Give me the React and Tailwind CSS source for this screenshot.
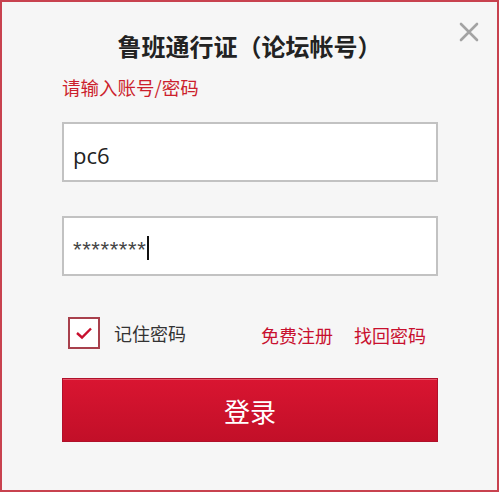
/**
 * 鲁班通行证登录框
 */
const cjk = "font-['Microsoft_YaHei','Noto_Sans_CJK_SC',sans-serif]";

export default function App() {
  return (
    <div className="w-[500px] h-[493px] bg-white">
      <div className={`relative w-[499px] h-[492px] border-2 border-[#c8424f] bg-[#f6f6f6] ${cjk}`}>
        <button className="absolute left-[455px] top-[18px] w-6 h-6 flex items-center justify-center">
          <svg width="20" height="20" viewBox="0 0 20 20">
            <path d="M2 2 L18 18 M18 2 L2 18" stroke="#a3a3a3" strokeWidth="2.6" strokeLinecap="round" />
          </svg>
        </button>

        <h2 className="pt-[28px] text-center text-[24px] leading-[32px] font-bold text-[#222]">
          鲁班通行证（论坛帐号）
        </h2>

        <div className="pl-[60px] w-[436px]">
          <p className="mt-[13px] text-[18.5px] leading-[24px] text-[#cc1f2d]">请输入账号/密码</p>

          <div className="mt-[23px] h-[60px] border-2 border-[#c2c2c2] bg-white flex items-center pl-[9px]">
            <span className="text-[22px] text-[#222] font-['Open_Sans','Noto_Sans',sans-serif] mt-[6px]">pc6</span>
          </div>

          <div className="mt-[34px] h-[60px] border-2 border-[#c2c2c2] bg-white flex items-center pl-[9px]">
            <span className="text-[22px] text-[#444] font-['Liberation_Sans',sans-serif] tracking-[0.6px] mt-[6px]">********</span>
            <span className="ml-[1px] w-[2px] h-[24px] bg-[#111] mt-[4px]" />
          </div>

          <div className="mt-[41px] h-[32px] flex items-center">
            <div className="w-[32px] h-[32px] border-2 border-[#a8404c] bg-white flex items-center justify-center ml-[6px]">
              <svg width="18" height="14" viewBox="0 0 18 14">
                <path d="M2 7 L7 11.5 L16 2.5" fill="none" stroke="#c8102e" strokeWidth="2.4" />
              </svg>
            </div>
            <span className="ml-[14px] text-[18px] text-[#333] leading-[24px]">记住密码</span>
            <a className="ml-auto mt-[4px] text-[18px] text-[#c8102e] leading-[24px]">免费注册</a>
            <a className="ml-[21px] mr-[12px] mt-[4px] text-[18px] text-[#c8102e] leading-[24px]">找回密码</a>
          </div>

          <button className="mt-[29px] w-[376px] h-[64px] border border-[#b0102a] bg-gradient-to-b from-[#d91531] to-[#c20f28] text-white text-[26px] flex items-center justify-center shadow-[inset_0_1px_0_#e6566a]">
            登录
          </button>
        </div>
      </div>
    </div>
  );
}
